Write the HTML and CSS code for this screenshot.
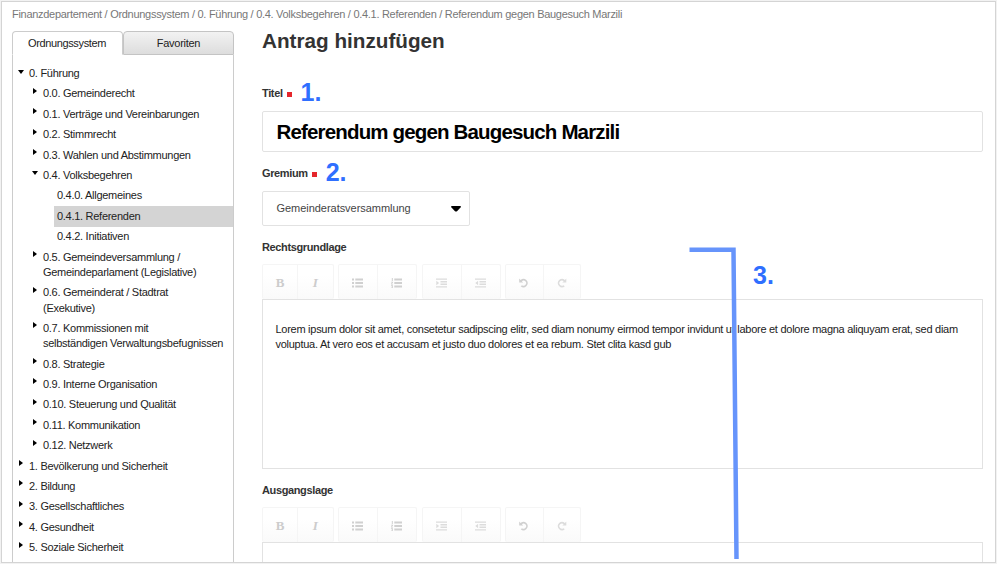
FILE: index.html
```html
<!DOCTYPE html>
<html lang="de">
<head>
<meta charset="utf-8">
<title>Antrag hinzufügen</title>
<link rel="stylesheet" href="styles.css">
</head>
<body>
<svg width="0" height="0" class="defs">
  <symbol id="ul" viewBox="0 0 12 10"><path d="M0 .5h2v2H0zM0 4h2v2H0zM0 7.5h2v2H0zM3.3.5H11v2H3.3zM3.3 4H11v2H3.3zM3.3 7.5H11v2H3.3z"/></symbol>
  <symbol id="ol" viewBox="0 0 12 10"><path d="M.8 0h1v3h-1zM0 3.8h2v1L.9 6H2v.6H0V5.800L1.200 4.500H0zM0 7.200h2V10H0v-.6h1.300v-.5H.5v-.5h.8v-.5H0zM3.300.5H11v2H3.300zM3.300 4H11v2H3.300zM3.300 7.500H11v2H3.300z"/></symbol>
  <symbol id="indent" viewBox="0 0 12 10"><path d="M0 .5h11v1.300H0zM4.500 3H11v1.500H4.500zM4.500 5.500H11V7H4.500zM0 8.200h11v1.300H0zM.3 2.800L3.100 5 .3 7.200z"/></symbol>
  <symbol id="outdent" viewBox="0 0 12 10"><path d="M0 .5h11v1.300H0zM4.500 3H11v1.500H4.500zM4.500 5.500H11V7H4.500zM0 8.200h11v1.300H0zM3.100 2.800L.3 5l2.800 2.200z"/></symbol>
  <symbol id="undo" viewBox="0 0 12 10"><path d="M1.200.5v4h4L3.800 3.200a2.600 2.600 0 1 1 .2 4L2.700 8.300A4.200 4.200 0 1 0 2.600 1.900z"/></symbol>
  <symbol id="redo" viewBox="0 0 12 10"><path d="M10.300.5v4h-4l1.400-1.300a2.600 2.600 0 1 0-.2 4l1.300 1.100A4.200 4.200 0 1 1 8.900 1.900z"/></symbol>
</svg>
<div class="window">
  <nav class="breadcrumb">Finanzdepartement / Ordnungssystem / 0. Führung / 0.4. Volksbegehren / 0.4.1. Referenden / Referendum gegen Baugesuch Marzili</nav>
  <div class="columns">
    <aside class="sidebar">
      <div class="tabs"><div class="tab active">Ordnungssystem</div><div class="tab">Favoriten</div></div>
      <ul class="tree">
        <li class="open">0. Führung</li>
        <li class="l1">0.0. Gemeinderecht</li>
        <li class="l1">0.1. Verträge und Vereinbarungen</li>
        <li class="l1">0.2. Stimmrecht</li>
        <li class="l1">0.3. Wahlen und Abstimmungen</li>
        <li class="l1 open">0.4. Volksbegehren</li>
        <li class="l2">0.4.0. Allgemeines</li>
        <li class="l2 current">0.4.1. Referenden</li>
        <li class="l2">0.4.2. Initiativen</li>
        <li class="l1">0.5. Gemeindeversammlung /<br>Gemeindeparlament (Legislative)</li>
        <li class="l1">0.6. Gemeinderat / Stadtrat<br>(Exekutive)</li>
        <li class="l1">0.7. Kommissionen mit<br>selbständigen Verwaltungsbefugnissen</li>
        <li class="l1">0.8. Strategie</li>
        <li class="l1">0.9. Interne Organisation</li>
        <li class="l1">0.10. Steuerung und Qualität</li>
        <li class="l1">0.11. Kommunikation</li>
        <li class="l1">0.12. Netzwerk</li>
        <li>1. Bevölkerung und Sicherheit</li>
        <li>2. Bildung</li>
        <li>3. Gesellschaftliches</li>
        <li>4. Gesundheit</li>
        <li>5. Soziale Sicherheit</li>
      </ul>
    </aside>
    <main class="form">
      <h1>Antrag hinzufügen</h1>
      <div class="label title-label"><span>Titel</span><i></i><b class="step">1.</b></div>
      <div class="title-input"><span>Referendum gegen Baugesuch Marzili</span></div>
      <div class="label body-label"><span>Gremium</span><i></i><b class="step">2.</b></div>
      <div class="select"><span>Gemeinderatsversammlung</span><svg width="10" height="6" viewBox="0 0 10 6"><path d="M0 1Q0 0 1 0h8q1 0 1 1L6 5.200q-1 .8-2 0z"/></svg></div>
      <div class="label legal-label"><span>Rechtsgrundlage</span></div>
      <div class="toolbar">
        <div class="group g1"><span class="bold">B</span><span class="italic">I</span></div>
        <div class="group g2"><span><svg><use href="#ul"/></svg></span><span><svg><use href="#ol"/></svg></span></div>
        <div class="group g3 faint"><span><svg><use href="#indent"/></svg></span><span><svg><use href="#outdent"/></svg></span></div>
        <div class="group g4"><span><svg><use href="#undo"/></svg></span><span class="faint"><svg><use href="#redo"/></svg></span></div>
      </div>
      <div class="editor"><p>Lorem ipsum dolor sit amet, consetetur sadipscing elitr, sed diam nonumy eirmod tempor invidunt ut labore et dolore magna aliquyam erat, sed diam<br>voluptua. At vero eos et accusam et justo duo dolores et ea rebum. Stet clita kasd gub</p></div>
      <div class="label start-label"><span>Ausgangslage</span></div>
      <div class="toolbar">
        <div class="group g1"><span class="bold">B</span><span class="italic">I</span></div>
        <div class="group g2"><span><svg><use href="#ul"/></svg></span><span><svg><use href="#ol"/></svg></span></div>
        <div class="group g3 faint"><span><svg><use href="#indent"/></svg></span><span><svg><use href="#outdent"/></svg></span></div>
        <div class="group g4"><span><svg><use href="#undo"/></svg></span><span class="faint"><svg><use href="#redo"/></svg></span></div>
      </div>
      <div class="editor last"></div>
    </main>
  </div>
</div>
<svg class="bracket" width="60" height="320" viewBox="0 0 60 320"><path d="M3.500 4.700H47.500L50.500 314"/></svg>
<b class="step step3">3.</b>
</body>
</html>
```
FILE: styles.css
```css
* { box-sizing: border-box; }
body { margin: 0; width: 997px; height: 564px; overflow: hidden; padding: 1px; background: #f2f2f2; font: 11px/15.3px "Liberation Sans", Arial, sans-serif; color: #222; }
.defs { position: absolute; }
.window { height: 562px; border: 1px solid #d4d4d4; background: #fff; overflow: hidden; }
.breadcrumb { height: 29px; padding: 5px 0 0 10px; color: #777; white-space: nowrap; letter-spacing: -.29px; }
.columns { display: flex; height: 531px; }
.sidebar { width: 222px; margin-left: 10px; flex: none; display: flex; flex-direction: column; letter-spacing: -.28px; }
.tabs { display: flex; height: 24px; flex: none; }
.tab { width: 111px; text-align: center; line-height: 22px; border: 1px solid #c4c4c4; border-radius: 4px 4px 0 0; background: linear-gradient(#f2f2f2, #ddd); }
.tab.active { background: #fff; border-color: #ccc; border-bottom-color: #fff; letter-spacing: -.36px; padding-right: 1px; }
.tree { margin: 0; padding: 8.500px 0 0; list-style: none; flex: 1; border: solid #ccc; border-width: 0 1px; white-space: nowrap; }
.tree li { position: relative; padding: 2.550px 0 2.550px 16px; }
.tree li::before { content: ""; position: absolute; left: 6px; top: 4px; border: solid transparent; border-width: 3.500px 0 3.500px 4px; border-left-color: #000; }
.tree li.l1 { padding-left: 30px; }
.tree li.l1::before { left: 20px; }
.tree li.open::before { left: 5px; top: 6px; border-width: 4px 3.500px 0; border-color: #000 transparent transparent; }
.tree li.l1.open::before { left: 19px; }
.tree li.l2 { margin-left: 41px; padding-left: 3px; }
.tree li.l2::before { display: none; }
.tree li.current { background: #d4d4d4; }
.form { width: 721px; margin-left: 28px; flex: none; display: flex; flex-direction: column; }
.form > * { flex: none; }
h1 { margin: -2px 0 0; height: 54px; font-size: 20.700px; line-height: 24px; color: #333; white-space: nowrap; }
.label { display: flex; align-items: center; font-weight: bold; color: #333; letter-spacing: -.37px; }
.label > span { padding-top: 1px; }
.label i { width: 5px; height: 5px; background: #e5262c; margin: 3px 0 0 4px; }
.step { color: #2f6fff; font-size: 25px; line-height: 20px; margin: -2px 0 0 9px; letter-spacing: 0; }
.title-label { height: 20px; margin-bottom: 8px; }
.title-input { height: 41px; border: 1px solid #e2e2e2; padding-left: 13.500px; font-weight: bold; font-size: 20.500px; line-height: 40px; color: #000; letter-spacing: -.84px; border-radius: 2px; }
.body-label { height: 20px; margin: 11px 0 8px; }
.select { width: 208px; height: 35px; border: 1px solid #e2e2e2; border-radius: 2px; display: flex; align-items: center; justify-content: space-between; padding: 0 8px 0 13.500px; color: #444; letter-spacing: -.04px; }
.select svg { fill: #000; }
.legal-label { height: 16px; margin: 13px 0 8px; }
.toolbar { display: flex; height: 36px; padding-top: 1px; gap: 4.500px; }
.group { display: flex; border: 1px solid #f5f5f5; border-bottom: 0; border-radius: 2px; background: linear-gradient(#fff 30%, #fafafa); }
.group span { flex: 1; display: flex; align-items: center; justify-content: center; padding-top: 1px; }
.group span + span { border-left: 1px solid #f5f5f5; }
.group svg { width: 12px; height: 10px; fill: #d0d0d0; }
.group .bold, .group .italic { font: bold 13px "Liberation Serif", serif; color: #ccc; }
.group .italic { font-style: italic; }
.g1 { width: 71.500px; }
.g2, .g3 { width: 79px; }
.g4 { width: 76px; }
.faint svg { fill: #dcdcdc; }
.editor { height: 170px; border: 1px solid #e2e2e2; padding: 21.500px 0 0 12.500px; white-space: nowrap; letter-spacing: -.27px; }
.editor p { margin: 0; }
.start-label { height: 16px; margin: 13px 0 8px; }
.editor.last { height: 40px; }
.bracket { position: absolute; left: 686px; top: 245px; fill: none; stroke: #6694fb; stroke-width: 4.500px; }
.step3 { position: absolute; left: 753px; top: 265px; margin: 0; }
```
